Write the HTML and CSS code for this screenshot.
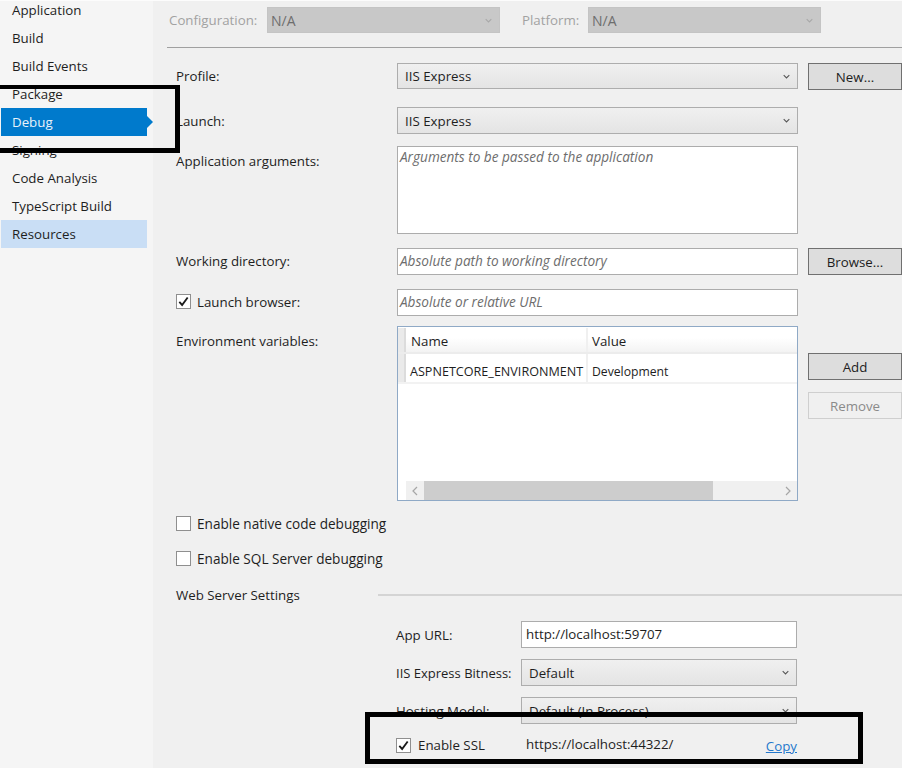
FILE: index.html
```html
<!DOCTYPE html>
<html lang="en">
<head>
<meta charset="utf-8">
<title>Debug</title>
<link rel="stylesheet" href="styles.css">
</head>
<body>
<div class="page">
  <nav class="side">
    <div class="item">Application</div>
    <div class="item">Build</div>
    <div class="item">Build Events</div>
    <div class="item">Package</div>
    <div class="item active">Debug</div>
    <div class="item">Signing</div>
    <div class="item">Code Analysis</div>
    <div class="item">TypeScript Build</div>
    <div class="item selected">Resources</div>
  </nav>
  <main class="main">
    <div class="topbar">
      <span class="dim cfg-label">Configuration:</span>
      <div class="select disabled cfg-select"><span>N/A</span><svg class="chev" viewBox="0 0 10 6"><path d="M1 1l4 4 4-4"/></svg></div>
      <span class="dim plat-label">Platform:</span>
      <div class="select disabled cfg-select"><span>N/A</span><svg class="chev" viewBox="0 0 10 6"><path d="M1 1l4 4 4-4"/></svg></div>
    </div>
    <div class="form">
      <div class="row r-profile"><label class="lab">Profile:</label><div class="select ctl"><span>IIS Express</span><svg class="chev" viewBox="0 0 10 6"><path d="M1 1l4 4 4-4"/></svg></div><button class="btn default">New...</button></div>
      <div class="row r-launch"><label class="lab">Launch:</label><div class="select ctl"><span>IIS Express</span><svg class="chev" viewBox="0 0 10 6"><path d="M1 1l4 4 4-4"/></svg></div></div>
      <div class="row r-args"><label class="lab top">Application arguments:</label><div class="input ctl area ph">Arguments to be passed to the application</div></div>
      <div class="row r-dir"><label class="lab">Working directory:</label><div class="input ctl ph">Absolute path to working directory</div><button class="btn default">Browse...</button></div>
      <div class="row r-browser"><label class="lab check"><span class="box"><svg viewBox="0 0 14 14"><path d="M2.5 7.5l3 3.2 6-8"/></svg></span>Launch browser:</label><div class="input ctl ph">Absolute or relative URL</div></div>
      <div class="row r-env">
        <label class="lab top env-lab">Environment variables:</label>
        <div class="table ctl">
          <div class="thead"><span class="gutter"></span><span class="c1">Name</span><span class="c2">Value</span></div>
          <div class="tbody"><span class="gutter"></span><span class="c1 cell">ASPNETCORE_ENVIRONMENT</span><span class="c2 cell dev">Development</span></div>
          <div class="scroll">
            <svg class="arr" viewBox="0 0 6 10"><path d="M5 1L1 5l4 4"/></svg>
            <div class="track"><div class="thumb"></div></div>
            <svg class="arr" viewBox="0 0 6 10"><path d="M1 1l4 4-4 4"/></svg>
          </div>
        </div>
        <div class="btns"><button class="btn default">Add</button><button class="btn off">Remove</button></div>
      </div>
      <label class="lab check r-native"><span class="box"></span>Enable native code debugging</label>
      <label class="lab check r-sql"><span class="box"></span>Enable SQL Server debugging</label>
      <div class="section"><span>Web Server Settings</span><i class="rule"></i></div>
      <div class="sub s-url"><label class="sublab">App URL:</label><div class="input subctl">http://localhost:59707</div></div>
      <div class="sub s-bit"><label class="sublab">IIS Express Bitness:</label><div class="select subctl"><span>Default</span><svg class="chev" viewBox="0 0 10 6"><path d="M1 1l4 4 4-4"/></svg></div></div>
      <div class="sub s-host"><label class="sublab">Hosting Model:</label><div class="select subctl"><span>Default (In Process)</span><svg class="chev" viewBox="0 0 10 6"><path d="M1 1l4 4 4-4"/></svg></div></div>
      <div class="sub s-ssl"><label class="sublab check"><span class="box"><svg viewBox="0 0 14 14"><path d="M2.5 7.5l3 3.2 6-8"/></svg></span>Enable SSL</label><div class="ssl"><span>https://localhost:44322/</span><a class="copy">Copy</a></div></div>
    </div>
  </main>
  <div class="mark mark-debug"></div>
  <div class="mark mark-ssl"></div>
</div>
</body>
</html>
```
FILE: styles.css
```css
* { box-sizing: border-box; }
html, body { margin: 0; padding: 0; }
body { font-family: "Open Sans", "Noto Sans", sans-serif; font-size: 13.3px; color: #1e1e1e; background: #f0f0f0; }
.page { position: relative; display: flex; width: 902px; height: 768px; overflow: hidden; }

.side { width: 153px; flex: none; background: #f5f5f5; padding: 0 6px 0 1px; box-shadow: inset 0 1px #fcfcfc; }
.item { height: 28px; line-height: 28px; padding-left: 11px; position: relative; }
.item:first-child { height: 24px; line-height: 20px; }
.active { background: #007acc; color: #e8f2fa; margin-right: 0; }
.active::after { content: ""; position: absolute; left: 100%; top: 8px; border-left: 6px solid #007acc; border-top: 6px solid transparent; border-bottom: 6px solid transparent; }
.selected { background: #c9def5; }

.main { flex: 1; min-width: 0; background: #f0f0f0; box-shadow: inset 0 1px #fcfcfc; }
.topbar { display: flex; align-items: center; height: 48px; margin-left: 14px; padding: 7px 0 14px 2px; border-bottom: 1px solid #a0a0a0; }
.dim { color: #a2a2a2; }
.cfg-label { width: 98px; white-space: nowrap; }
.plat-label { width: 66px; margin-left: 22px; }
.cfg-select { width: 233px; height: 26px; }

.select { display: flex; align-items: center; justify-content: space-between; padding: 0 7px 0 7px; border: 1px solid #adadad; background: linear-gradient(#f0f0f0, #e4e4e4); height: 27px; }
.select.disabled { background: #c8c8c8; border-color: #c4c4c4; color: #6e6e6e; padding-left: 3px; height: 26px; font-size: 14px; }
.chev { width: 7px; height: 5px; fill: none; stroke: #555; stroke-width: 1.5; }
.disabled .chev { stroke: #a8a8a8; }
.input { border: 1px solid #acacac; background: #fff; height: 27px; line-height: 25px; padding-left: 2px; }
.ph { color: #6d6d6d; font-style: italic; font-size: 13.6px; line-height: 23px; }
.form { padding: 0 0 0 23px; }
.row { display: flex; align-items: center; }
.lab { width: 221px; flex: none; }
.top { align-self: flex-start; padding-top: 6px; }
.ctl { width: 401px; flex: none; }
.btn { font: inherit; color: inherit; width: 94px; height: 27px; margin-left: 10px; padding: 0; flex: none; }
.default { background: #dddddd; border: 1px solid #707070; }
.off { background: #f0f0f0; border: 1px solid #cfcfcf; color: #8a8a8a; }

.r-profile { margin-top: 15px; align-items: flex-start; }
.r-profile .lab { line-height: 26px; }
.r-profile .select { height: 26px; }
.r-launch { margin-top: 17px; }
.r-args { margin-top: 12px; }
.area { height: 88px; line-height: 19px; }
.r-dir { margin-top: 14px; }
.r-dir .lab, .r-browser .lab { padding-bottom: 2px; }
.r-browser { margin-top: 14px; }
.check { display: flex; align-items: center; }
.box { width: 15px; height: 15px; flex: none; border: 1px solid #8f8f8f; background: #fff; margin-right: 6px; display: flex; }
.box svg { width: 13px; height: 13px; fill: none; stroke: #1a1a1a; stroke-width: 2; }

.r-env { margin-top: 10px; align-items: flex-start; }
.env-lab { padding-top: 6px; }
.table { height: 175px; border: 1px solid #8fa9c6; background: #fff; position: relative; padding-top: 1px; display: flex; flex-direction: column; }
.thead, .tbody { display: flex; }
.thead { height: 26px; line-height: 26px; background: linear-gradient(#fff 40%, #f3f3f3); border-bottom: 2px solid #ececec; }
.tbody { height: 30px; line-height: 36px; border-bottom: 2px solid #f2f2f2; font-size: 12.6px; }
.gutter { width: 8px; background: #eaeaea; flex: none; border-right: 2px solid #dcdcdc; }
.c1 { width: 182px; flex: none; padding-left: 5px; border-right: 2px solid #f0f0f0; }
.cell { padding-left: 4px; white-space: nowrap; }
.c2 { padding-left: 4px; }
.dev { font-size: 12.2px; }
.scroll { margin-top: auto; margin-left: 8px; height: 19px; display: flex; align-items: center; background: #f0f0f0; }
.arr { width: 6px; height: 10px; fill: none; stroke: #a6a6a6; stroke-width: 1.2; margin: 0 6px; flex: none; }
.track { flex: 1; align-self: stretch; }
.thumb { width: 289px; height: 100%; background: #cdcdcd; }
.btns { display: flex; flex-direction: column; gap: 12px; padding-top: 27px; }

.r-native, .r-sql { font-size: 13.6px; width: auto; height: 16px; }
.r-native { margin-top: 14px; }
.r-sql { margin-top: 19px; }
.section { display: flex; align-items: center; margin-top: 19px; height: 20px; }
.section span { width: 202px; }
.rule { flex: 1; height: 2px; background: #d4d4d4; }
.sub { display: flex; align-items: center; margin-left: 220px; }
.sublab { width: 125px; flex: none; white-space: nowrap; }
.s-bit .sublab { font-size: 13px; }
.s-ssl .box { margin-right: 7px; }
.subctl { width: 276px; flex: none; }
.s-url { margin-top: 16px; }
.s-bit { margin-top: 11px; }
.s-host { margin-top: 11px; }
.s-ssl { margin-top: 12px; height: 18px; }
.s-url .input { padding-left: 4px; }
.ssl { width: 276px; display: flex; justify-content: space-between; padding-left: 5px; }
.copy { color: #2478cc; text-decoration: underline; padding-top: 2px; }

.mark { position: absolute; border-style: solid; border-color: #000; }
.mark-debug { left: -6px; top: 85px; width: 186px; height: 68px; border-width: 4px 5px 5px; }
.mark-ssl { left: 365px; top: 712px; width: 498px; height: 52px; border-width: 5px; }
```
